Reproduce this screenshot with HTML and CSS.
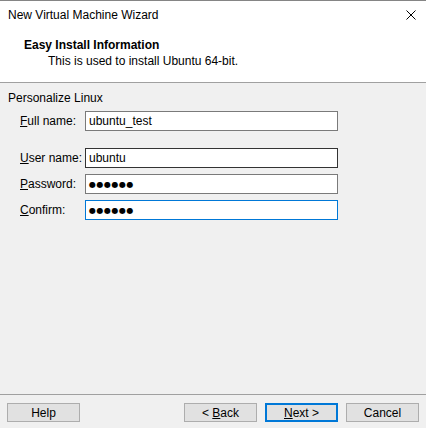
FILE: index.html
```html
<!DOCTYPE html>
<html>
<head>
<meta charset="utf-8">
<link rel="stylesheet" href="styles.css">
</head>
<body>
<div class="window">
  <div class="titlebar">
    <span class="title">New Virtual Machine Wizard</span>
    <svg class="close" width="10" height="10" viewBox="0 0 10 10"><path d="M0.5 0.5 L9.5 9.5 M9.5 0.5 L0.5 9.5" stroke="#000" stroke-width="1" fill="none"/></svg>
  </div>
  <div class="header">
    <div class="h-title">Easy Install Information</div>
    <div class="h-sub">This is used to install Ubuntu 64-bit.</div>
  </div>
  <div class="body">
    <div class="content">
      <div class="group-label">Personalize Linux</div>
      <div class="row first">
        <span class="label"><u>F</u>ull name:</span>
        <div class="field">ubuntu_test</div>
      </div>
      <div class="row gap-big">
        <span class="label"><u>U</u>ser name:</span>
        <div class="field hover">ubuntu</div>
      </div>
      <div class="row">
        <span class="label"><u>P</u>assword:</span>
        <div class="field dots">●●●●●●</div>
      </div>
      <div class="row">
        <span class="label"><u>C</u>onfirm:</span>
        <div class="field focus dots">●●●●●●</div>
      </div>
    </div>
    <div class="footer">
      <button class="btn">Help</button>
      <div class="spacer"></div>
      <button class="btn">&lt; <u>B</u>ack</button>
      <button class="btn default"><u>N</u>ext &gt;</button>
      <button class="btn">Cancel</button>
    </div>
  </div>
</div>
</body>
</html>
```
FILE: styles.css
```css
html, body {
  margin: 0;
  padding: 0;
  width: 426px;
  height: 428px;
  overflow: hidden;
  background: #f0f0f0;
}
.window {
  width: 426px;
  height: 428px;
  box-sizing: border-box;
  border-top: 1px solid #858585;
  display: flex;
  flex-direction: column;
  font-family: "Segoe UI", "Liberation Sans", Arial, sans-serif;
  font-size: 12px;
  line-height: 16px;
  color: #000;
}
.titlebar {
  background: #fff;
  display: flex;
  align-items: flex-start;
  padding: 6px 10px 0 8px;
  height: 16px;
}
.title {
  flex: 1;
}
.close {
  margin-top: 3px;
}
.header {
  background: #fff;
  padding: 14px 0 13px 24px;
  border-bottom: 1px solid #a0a0a0;
}
.h-title {
  font-weight: bold;
}
.h-sub {
  padding-left: 24px;
}
.body {
  flex: 1;
  display: flex;
  flex-direction: column;
  background: #f0f0f0;
}
.content {
  flex: 1;
  padding: 7px 0 0 8px;
  border-bottom: 1px solid #a0a0a0;
}
.row {
  display: flex;
  align-items: center;
  margin-top: 6px;
  padding-left: 12px;
}
.row.first {
  margin-top: 5px;
}
.row.gap-big {
  margin-top: 17px;
}
.label {
  width: 65px;
}
.field {
  width: 253px;
  height: 20px;
  box-sizing: border-box;
  border: 1px solid #7a7a7a;
  background: #fff;
  padding: 1px 3px;
}
.field.hover {
  border-color: #333;
}
.field.focus {
  border-color: #0078d7;
}
.dots {
  font-family: "DejaVu Sans", sans-serif;
  font-size: 8px;
  letter-spacing: 0.5px;
  line-height: 17px;
}
.footer {
  display: flex;
  padding: 8px 7px 6px 7px;
  gap: 8px;
}
.spacer {
  flex: 1;
}
.btn {
  width: 73px;
  height: 19px;
  box-sizing: border-box;
  border: 1px solid #adadad;
  background: #e1e1e1;
  font-family: "Segoe UI", "Liberation Sans", Arial, sans-serif;
  font-size: 12px;
  line-height: 16px;
  color: #000;
  padding: 0;
  margin: 0;
}
.btn.default {
  border: 2px solid #0078d7;
}
```
